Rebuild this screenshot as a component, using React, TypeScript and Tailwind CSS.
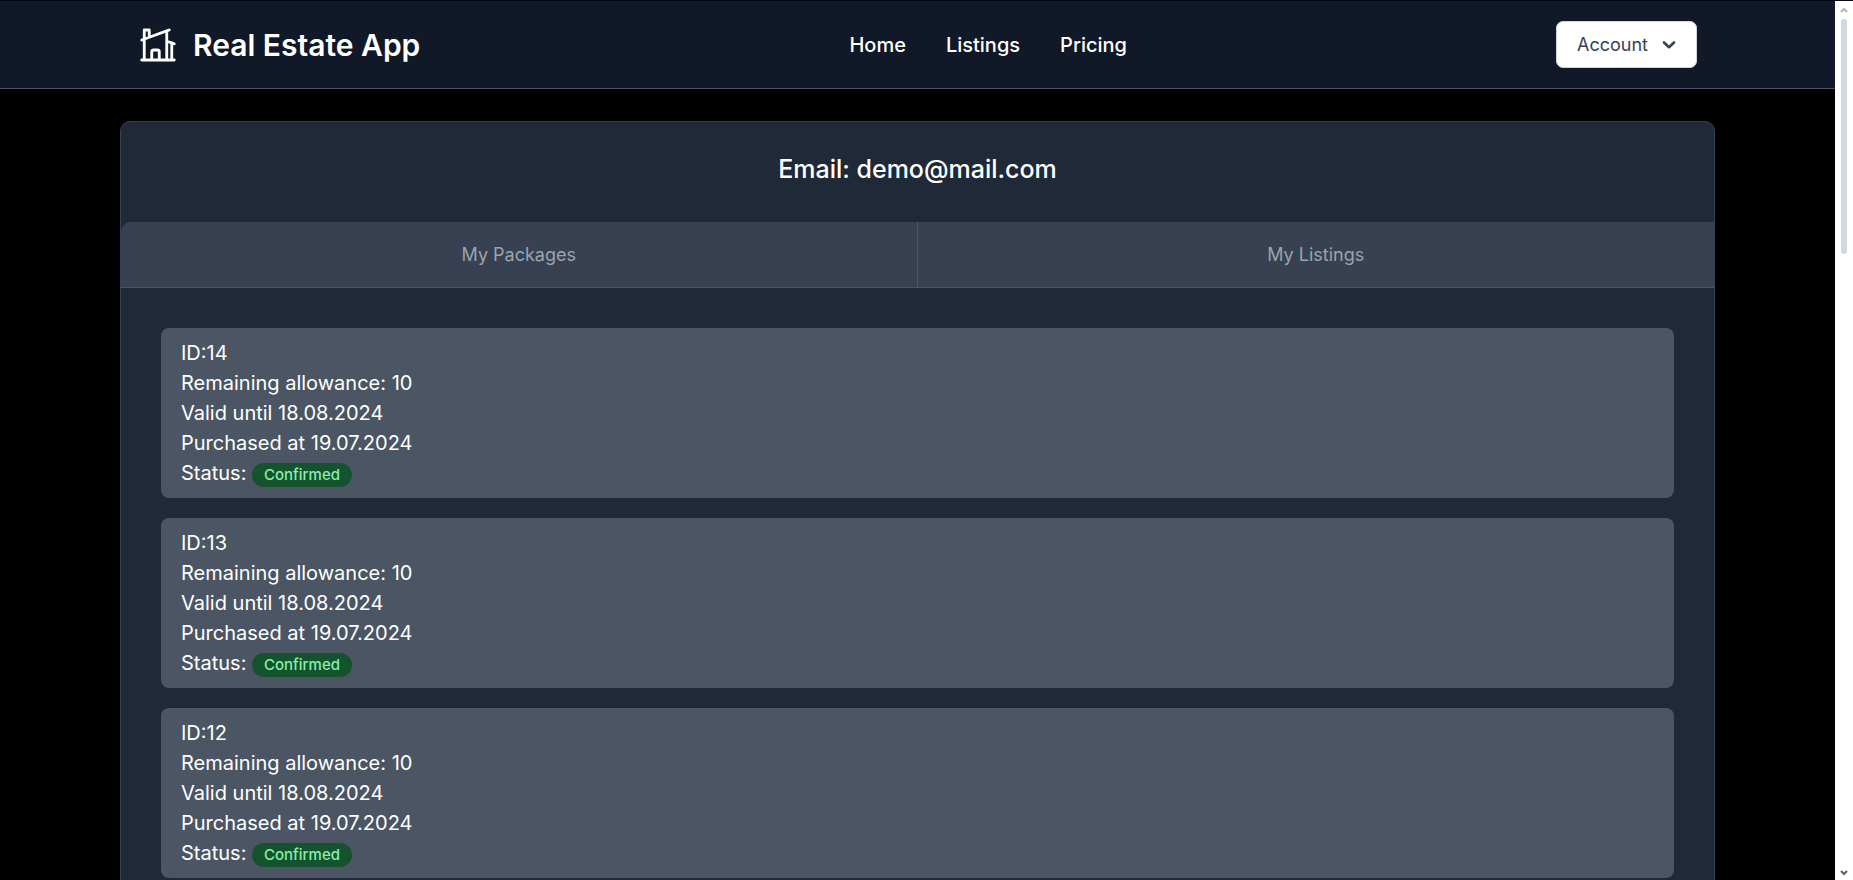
import { HiOutlineHomeModern } from "react-icons/hi2";

type Package = {
  id: number;
  allowance: number;
  validUntil: string;
  purchasedAt: string;
  status: string;
};

const packages: Package[] = [
  { id: 14, allowance: 10, validUntil: "18.08.2024", purchasedAt: "19.07.2024", status: "Confirmed" },
  { id: 13, allowance: 10, validUntil: "18.08.2024", purchasedAt: "19.07.2024", status: "Confirmed" },
  { id: 12, allowance: 10, validUntil: "18.08.2024", purchasedAt: "19.07.2024", status: "Confirmed" },
];

const links = ["Home", "Listings", "Pricing"];

function Header() {
  return (
    <header className="border-t border-b border-t-[#030712] border-b-[#4b5563] bg-[#111827]">
      <div className="mx-auto flex max-w-[1599px] items-center justify-between px-5 py-5">
        <a href="#" className="flex items-center gap-[15px]">
          <HiOutlineHomeModern className="size-10 [stroke-width:1.7]" aria-hidden="true" />
          <span className="text-[30px] leading-10 font-semibold">Real Estate App</span>
        </a>
        <nav className="flex gap-10 text-[20px] leading-[30px] font-medium">
          {links.map((label) => (
            <a key={label} href="#">
              {label}
            </a>
          ))}
        </nav>
        <button
          type="button"
          className="flex h-[47px] items-center gap-[14px] rounded-[7px] border border-[#d1d5db] bg-white px-5 text-[18px] leading-[25px] text-[#374151]"
        >
          Account
          <svg viewBox="0 0 14 14" className="size-3.5" aria-hidden="true">
            <path
              d="M2 4.5 7 9.2l5-4.7"
              fill="none"
              stroke="currentColor"
              strokeWidth="2.6"
              strokeLinecap="round"
              strokeLinejoin="round"
            />
          </svg>
        </button>
      </div>
    </header>
  );
}

function PackageCard({ item }: { item: Package }) {
  return (
    <li className="rounded-lg bg-[#4b5563] px-5 py-2.5 text-[20px] leading-[30px]">
      <p>ID:{item.id}</p>
      <p>Remaining allowance: {item.allowance}</p>
      <p>Valid until {item.validUntil}</p>
      <p>Purchased at {item.purchasedAt}</p>
      <p>
        Status:{" "}
        <span className="inline-block rounded-full bg-[#14532d] px-3 align-middle text-[15px] leading-6 font-medium text-[#86efac]">
          {item.status}
        </span>
      </p>
    </li>
  );
}

function ScrollRail() {
  return (
    <div className="mt-px flex w-[18px] shrink-0 flex-col items-center bg-white pt-1.5 pb-1" aria-hidden="true">
      <svg viewBox="0 0 8 6" className="h-1.5 w-2 text-[#b4b4b4]">
        <path d="M1 5 4 2l3 3" fill="none" stroke="currentColor" strokeWidth="2" />
      </svg>
      <div className="mt-1.5 h-[27%] w-1.5 rounded-full bg-[#d0dae2]" />
      <svg viewBox="0 0 8 6" className="mt-auto h-1.5 w-2 text-[#606060]">
        <path d="M1 1 4 4l3-3" fill="none" stroke="currentColor" strokeWidth="2" />
      </svg>
    </div>
  );
}

export default function App() {
  return (
    <div className="flex h-screen bg-[#030712] font-['Inter',sans-serif] text-white">
      <div className="flex-1 overflow-y-auto bg-black [scrollbar-width:none]">
        <Header />
        <main className="mx-auto max-w-[1595px] py-8">
          <section className="rounded-[10px] border border-[#374151] bg-[#1f2937]">
            <h1 className="pt-[30px] pb-[35px] text-center text-[25px] leading-[35px] font-medium">
              Email: demo@mail.com
            </h1>
            <div
              role="tablist"
              className="grid grid-cols-2 divide-x divide-[#4b5563] overflow-hidden rounded-tl-[10px] border-b border-[#4b5563] bg-[#374151] text-[18px] leading-[25px] text-[#9ca3af]"
            >
              <button type="button" role="tab" className="py-5">
                My Packages
              </button>
              <button type="button" role="tab" className="py-5">
                My Listings
              </button>
            </div>
            <ul className="flex flex-col gap-5 p-10">
              {packages.map((item) => (
                <PackageCard key={item.id} item={item} />
              ))}
            </ul>
          </section>
        </main>
      </div>
      <ScrollRail />
    </div>
  );
}
